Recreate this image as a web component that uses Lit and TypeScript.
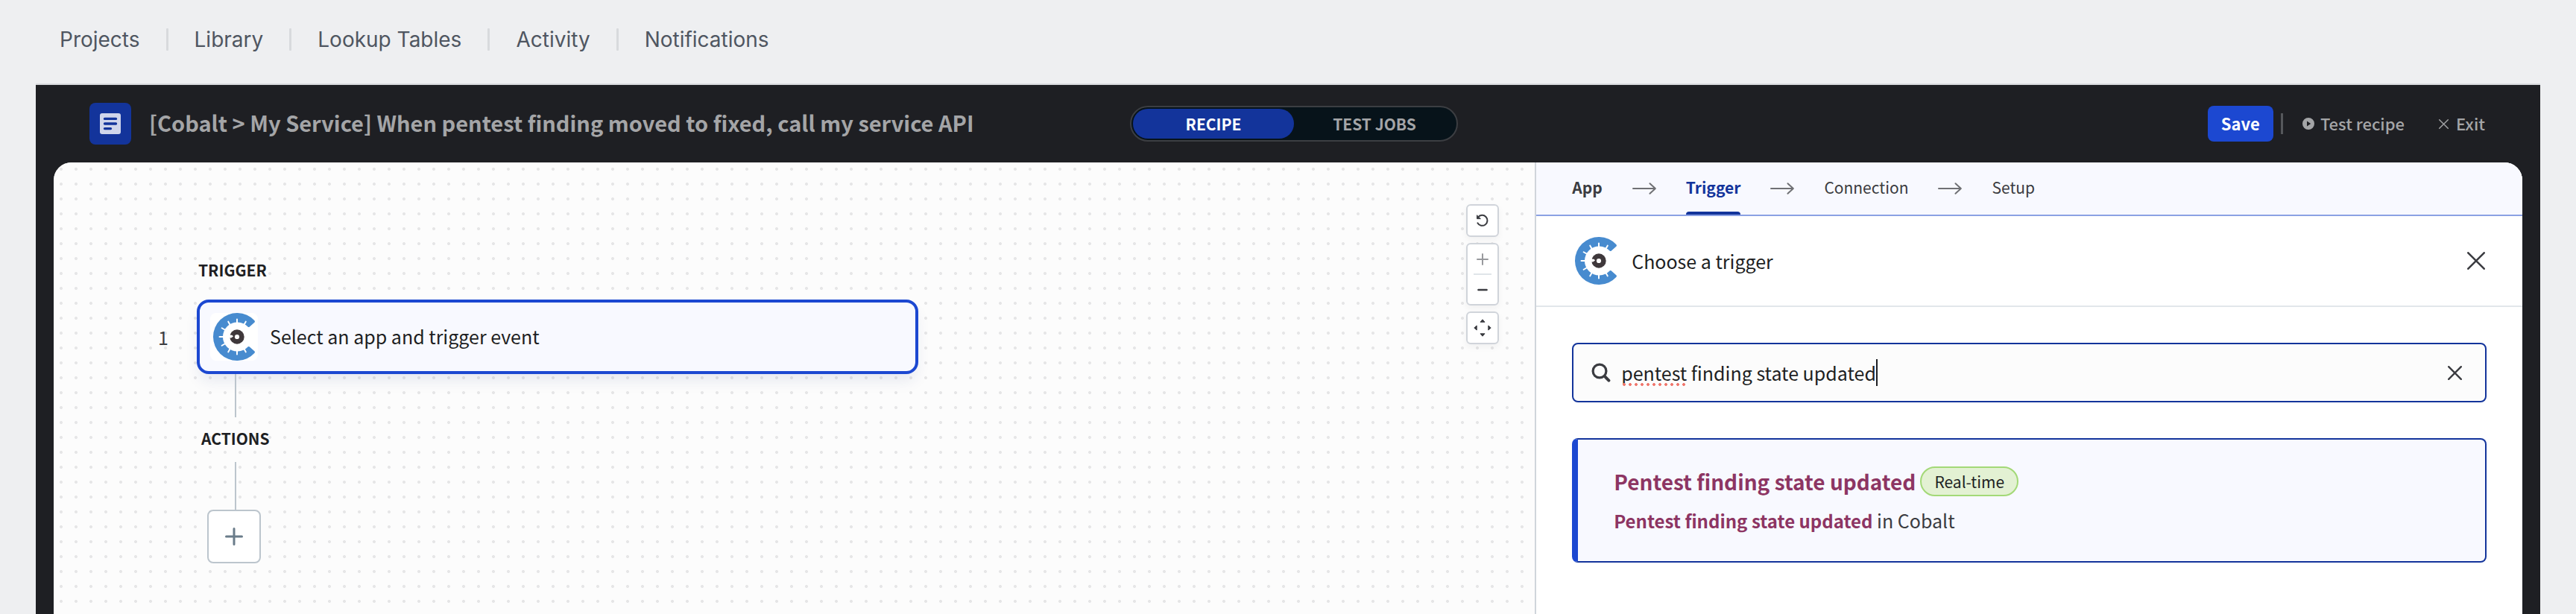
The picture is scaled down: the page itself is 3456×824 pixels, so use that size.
import { LitElement, html, css, svg } from "lit";
import { customElement, property, state } from "lit/decorators.js";
import { classMap } from "lit/directives/class-map.js";

const uiFont = css`"Noto Sans CJK SC", "Open Sans", sans-serif`;

const tickAngles = [60, 90, 120, 150, 180, 210, 240, 270, 300];

@customElement("cobalt-logo")
export class CobaltLogo extends LitElement {
  static styles = css`
    :host { display: block; flex: none; width: 64px; height: 64px; background: #fff; border-radius: 8px; overflow: hidden; }
    svg { display: block; width: 100%; height: 100%; }
  `;
  render() {
    return html`
      <svg viewBox="0 0 64 64" role="img" aria-label="Cobalt">
        <path fill="#478bcf" d="M59.5 10.3A32 32 0 1 0 59.5 53.7Q60.3 52.4 59.6 51.6L52.6 45.3Q51.6 44.6 50.8 45.2A19.5 19.5 0 1 1 50.8 18.8Q51.6 19.4 52.6 18.7L59.6 12.4Q60.3 11.6 59.5 10.3Z" />
        ${tickAngles.map((a) => {
          const r = (a * Math.PI) / 180;
          return svg`<line stroke="#fff" stroke-width="2" stroke-linecap="round"
            x1=${36 + 18 * Math.cos(r)} y1=${32 - 18 * Math.sin(r)}
            x2=${36 + 23.5 * Math.cos(r)} y2=${32 - 23.5 * Math.sin(r)} />`;
        })}
        <circle cx="36" cy="32" r="9.7" fill="#3f383b" />
        <path d="M25 29.5L29.5 29.8L31 31.4L28.2 33.5L25.5 33.2Z" fill="#fff" />
        <circle cx="36" cy="32" r="3.1" fill="#fff" />
      </svg>
    `;
  }
}

@customElement("cross-icon")
export class CrossIcon extends LitElement {
  @property({ type: Number }) size = 24;
  @property({ type: Number }) weight = 3;
  static styles = css`
    :host { display: block; }
    svg { display: block; }
  `;
  render() {
    const n = this.size;
    const p = this.weight / 2;
    return html`
      <svg width=${n} height=${n} viewBox="0 0 ${n} ${n}" aria-hidden="true" fill="none" stroke="currentColor" stroke-width=${this.weight} stroke-linecap="round">
        <path d="M${p} ${p}L${n - p} ${n - p}M${n - p} ${p}L${p} ${n - p}" />
      </svg>
    `;
  }
}

@customElement("recipe-header")
export class RecipeHeader extends LitElement {
  @state() private tab = "RECIPE";
  static styles = css`
    :host { display: grid; grid-template-columns: 1fr auto 1fr; align-items: center; height: 104px; padding: 0 56px 0 72px; color: #a4a5a7; }
    button { font: inherit; color: inherit; background: none; border: 0; padding: 0; cursor: pointer; }
    .name { display: flex; align-items: center; gap: 24px; min-width: 0; }
    .badge { display: block; flex: none; width: 56px; height: 56px; }
    h1 { margin: 0; padding-bottom: 4px; font-size: 29px; line-height: 40px; font-weight: 700; white-space: nowrap; }
    .tabs { display: flex; padding: 2px; border: 2px solid #3c3e42; border-radius: 24px; background: #07131a; }
    .tab { width: 216px; height: 40px; border-radius: 20px; font-size: 21px; line-height: 38px; font-weight: 700; }
    .tab.on { background: #13349b; color: #fff; }
    .actions { display: flex; align-items: center; justify-content: flex-end; padding-right: 18px; font-size: 22px; line-height: 32px; font-weight: 500; }
    .save { height: 48px; padding: 0 18px 2px; border-radius: 8px; background: #1c48d1; color: #fff; font-weight: 700; }
    .rule { width: 3px; height: 28px; margin: 0 26px 0 10px; background: #55575b; }
    .act { display: flex; align-items: center; gap: 8px; }
    .act + .act { margin-left: 46px; }
    .act.exit { gap: 10px; }
    .act span { padding-bottom: 2px; }
  `;
  render() {
    return html`
      <div class="name">
        <svg class="badge" viewBox="0 0 56 56" aria-hidden="true">
          <rect width="56" height="56" rx="8" fill="#13349b" />
          <rect x="14" y="14" width="28" height="28" rx="3" fill="#d0d6eb" />
          <path d="M20.5 21.4h15M20.5 28h15M20.5 34.6h8" stroke="#13349b" stroke-width="3.4" stroke-linecap="round" />
        </svg>
        <h1>[Cobalt &gt; My Service] When pentest finding moved to fixed, call my service API</h1>
      </div>
      <div class="tabs" role="tablist">
        ${["RECIPE", "TEST JOBS"].map(
          (t) => html`<button role="tab" aria-selected=${t === this.tab} class=${classMap({ tab: true, on: t === this.tab })} @click=${() => (this.tab = t)}>${t}</button>`
        )}
      </div>
      <div class="actions">
        <button class="save">Save</button>
        <span class="rule"></span>
        <button class="act">
          <svg width="16" height="16" viewBox="0 0 16 16" aria-hidden="true">
            <path fill="currentColor" fill-rule="evenodd" d="M8 0a8 8 0 1 0 0 16A8 8 0 0 0 8 0ZM6 4.6L11.2 8L6 11.4Z" />
          </svg>
          <span>Test recipe</span>
        </button>
        <button class="act exit"><cross-icon .size=${13} .weight=${1.4}></cross-icon><span>Exit</span></button>
      </div>
    `;
  }
}

@customElement("recipe-canvas")
export class RecipeCanvas extends LitElement {
  static styles = css`
    :host {
      display: flex; justify-content: space-between; align-items: flex-start; padding: 56px 48px 0 136px; color: #1e1f23;
      background: radial-gradient(circle, #e6e6e7 0 1.7px, transparent 2.3px) 0 -1px / 20px 20px #fcfcfc;
    }
    button { font: inherit; color: inherit; background: #fff; padding: 0; cursor: pointer; }
    svg { display: block; }
    .flow { display: grid; grid-template-columns: 56px 968px; padding-top: 72px; }
    h2 { grid-column: 2; margin: 0; padding-left: 2px; font-size: 21px; line-height: 32px; font-weight: 700; }
    h2.sub { padding-left: 6px; }
    .num { align-self: center; margin-top: 24px; padding-left: 4px; font-size: 25px; line-height: 36px; color: #3b3c41; }
    .step {
      display: flex; align-items: center; gap: 16px; height: 100px; margin-top: 24px; padding: 0 14px; box-sizing: border-box;
      border: 4px solid #1c48d1; border-radius: 16px; background: #f8f9ff; text-align: left;
      box-shadow: 0 12px 20px -4px rgba(30, 50, 130, 0.1); font-size: 25px;
    }
    .step span { padding-bottom: 2px; }
    .wire { grid-column: 2; width: 2px; height: 58px; margin-left: 51px; background: #bcc5cd; }
    .wire.low { height: 64px; }
    .sub { margin: 12px 0 16px; }
    .add { grid-column: 2; display: grid; place-items: center; width: 72px; height: 72px; margin-left: 14px; border: 2px solid #bcc5cd; border-radius: 8px; color: #6a7c8a; }
    .tools { display: grid; gap: 8px; color: #3b3c41; }
    .tools button, .zoom { display: grid; place-items: center; width: 44px; height: 44px; box-sizing: border-box; border: 2px solid #d0d4da; border-radius: 6px; box-shadow: 0 4px 8px rgba(30, 30, 40, 0.05); }
    .zoom { height: 84px; grid-template-rows: 1fr 2px 1fr; background: #fff; }
    .tools .zoom button { width: 36px; height: 36px; border: 0; box-shadow: none; }
    .tools .zoom .dim { color: #98999d; }
    .zoom hr { width: 24px; height: 2px; margin: 0; border: 0; background: #e0e5e9; }
  `;
  render() {
    return html`
      <section class="flow">
        <h2>TRIGGER</h2>
        <span class="num">1</span>
        <button class="step"><cobalt-logo></cobalt-logo><span>Select an app and trigger event</span></button>
        <div class="wire"></div>
        <h2 class="sub">ACTIONS</h2>
        <div class="wire low"></div>
        <button class="add" aria-label="Add step">
          <svg width="24" height="24" viewBox="0 0 24 24" fill="none" stroke="currentColor" stroke-width="3" stroke-linecap="round"><path d="M12 1.5v21M1.5 12h21" /></svg>
        </button>
      </section>
      <aside class="tools">
        <button aria-label="Undo">
          <svg width="18" height="18" viewBox="0 0 18 18" fill="none" stroke="currentColor" stroke-width="2" stroke-linecap="round">
            <path d="M3 4.5A7 7 0 1 1 2.4 12.3" /><path d="M1.5 2.2V6.6H6Z" fill="currentColor" stroke-width="1" stroke-linejoin="round" />
          </svg>
        </button>
        <div class="zoom">
          <button class="dim" aria-label="Zoom in"><svg width="16" height="16" viewBox="0 0 16 16" stroke="currentColor" stroke-width="2" stroke-linecap="round"><path d="M8 1v14M1 8h14" /></svg></button>
          <hr />
          <button aria-label="Zoom out"><svg width="16" height="16" viewBox="0 0 16 16" stroke="currentColor" stroke-width="2.4" stroke-linecap="round"><path d="M2.4 8h11.2" /></svg></button>
        </div>
        <button aria-label="Fit to screen">
          <svg width="24" height="24" viewBox="0 0 24 24" fill="currentColor" stroke="currentColor" stroke-linejoin="round"><path d="M12 .8L15 4.2H9ZM12 23.2L15 19.8H9ZM.8 12L4.2 9V15ZM23.2 12L19.8 9V15Z" /></svg>
        </button>
      </aside>
    `;
  }
}

@customElement("trigger-panel")
export class TriggerPanel extends LitElement {
  @state() private query = "pentest finding state updated";
  private steps = ["App", "Trigger", "Connection", "Setup"];
  static styles = css`
    :host { display: block; min-width: 0; border-left: 2px solid #d0d5db; background: #fff; color: #1e1f23; }
    button { font: inherit; color: inherit; background: none; border: 0; padding: 0; cursor: pointer; }
    svg { display: block; flex: none; }
    .steps { display: flex; align-items: stretch; gap: 40px; height: 70px; padding-left: 48px; border-bottom: 2px solid #8ba1e4; background: #f8f9ff; color: #3b3c41; font-size: 21px; line-height: 32px; }
    .steps svg { align-self: center; color: #6f7074; }
    .crumb { padding-bottom: 4px; }
    .done { font-weight: 700; }
    .now { font-weight: 700; color: #13349b; position: relative; }
    .now::after { content: ""; position: absolute; left: 0; right: 0; bottom: 0; height: 4px; border-radius: 4px 4px 0 0; background: #13349b; }
    .head { display: flex; align-items: center; height: 120px; padding: 0 50px 0 48px; border-bottom: 2px solid #e2e6ea; }
    h2 { flex: 1; margin: 0 0 0 16px; font-size: 25px; line-height: 40px; font-weight: 400; }
    .close { color: #3b3c41; }
    .body { display: grid; gap: 48px; padding: 48px; }
    .search { display: flex; align-items: center; height: 76px; padding: 0 31px 0 24px; border: 2px solid #13349b; border-radius: 8px; background: #fcfcfc; color: #3b3c41; }
    .field { position: relative; flex: 1; display: flex; align-items: center; margin-left: 14px; }
    input { field-sizing: content; min-width: 0; padding: 0; border: 0; outline: 0; background: none; color: #1e1f23; font: 400 25px/40px ${uiFont}; }
    .caret { width: 2px; height: 36px; background: #1e1f23; }
    .typo { position: absolute; left: 0; bottom: 2px; width: 88px; height: 4px; background: radial-gradient(circle, #f0796f 0 1.6px, transparent 2.2px) 0 0 / 8px 4px; }
    .hit { display: block; padding: 34px 48px; border: 2px solid #13349b; border-left: 8px solid #1c48d1; border-radius: 8px; background: #f8f9ff; color: #3b3c41; text-align: left; }
    .line { display: flex; align-items: center; gap: 6px; }
    .line strong { font-size: 28px; line-height: 44px; font-weight: 700; }
    .hit strong { color: #8d3563; }
    .tag { height: 36px; padding: 0 17px; border: 2px solid #a3d977; border-radius: 20px; background: #e3f1d3; color: #1e1f23; font-size: 21px; line-height: 36px; }
    .desc { display: block; margin-top: 10px; font-size: 25px; line-height: 40px; }
    .desc strong { font-size: 24px; }
  `;
  private arrow() {
    return html`<svg width="32" height="16" viewBox="0 0 32 16" fill="none" stroke="currentColor" stroke-width="2" stroke-linecap="round" stroke-linejoin="round"><path d="M1 8h29.5M23.5 1.2L30.8 8L23.5 14.8" /></svg>`;
  }
  render() {
    return html`
      <nav class="steps">
        ${this.steps.map(
          (s, i) => html`${i ? this.arrow() : ""}<button class=${classMap({ crumb: true, done: i === 0, now: i === 1 })}>${s}</button>`
        )}
      </nav>
      <header class="head">
        <cobalt-logo></cobalt-logo>
        <h2>Choose a trigger</h2>
        <button class="close" aria-label="Close"><cross-icon .size=${24} .weight=${2.6}></cross-icon></button>
      </header>
      <div class="body">
        <div class="search">
          <svg width="26" height="26" viewBox="0 0 26 26" fill="none" stroke="currentColor" stroke-width="3.2" stroke-linecap="round" aria-hidden="true"><circle cx="11" cy="11" r="8.9" /><path d="M18 18.2L23.4 23.6" stroke-width="4" /></svg>
          <div class="field">
            <input type="text" aria-label="Search triggers" spellcheck="false" .value=${this.query} @input=${(e: Event) => (this.query = (e.target as HTMLInputElement).value)} />
            <span class="caret"></span>
            ${this.query.startsWith("pentest") ? html`<span class="typo"></span>` : ""}
          </div>
          <button aria-label="Clear" @click=${() => (this.query = "")}><cross-icon .size=${19} .weight=${2.4}></cross-icon></button>
        </div>
        <button class="hit">
          <span class="line"><strong>Pentest finding state updated</strong><span class="tag">Real-time</span></span>
          <span class="desc"><strong>Pentest finding state updated</strong> in Cobalt</span>
        </button>
      </div>
    `;
  }
}

@customElement("app-root")
export class AppRoot extends LitElement {
  static styles = css`
    :host { display: flex; flex-direction: column; box-sizing: border-box; min-height: 100vh; padding: 0 48px; background: #eeeff1; font-family: ${uiFont}; }
    .nav { display: flex; align-items: center; height: 106px; padding: 0 32px 6px; font: 400 28px/32px Inter, sans-serif; }
    .nav a { color: #4f5661; text-decoration: none; }
    .nav a + a { display: flex; align-items: center; }
    .nav a + a::before { content: ""; width: 3px; height: 30px; margin: 0 35px; border-radius: 1px; background: #d8dadd; }
    .shell { flex: 1; display: flex; flex-direction: column; border-top: 2px solid #d8dadd; background: #1e1f23; }
    .work { flex: 1; display: grid; grid-template-columns: 3fr 2fr; margin: 0 24px; border-radius: 24px 24px 0 0; overflow: hidden; background: #fcfcfc; }
  `;
  render() {
    return html`
      <nav class="nav">
        ${["Projects", "Library", "Lookup Tables", "Activity", "Notifications"].map((t) => html`<a href="#">${t}</a>`)}
      </nav>
      <main class="shell">
        <recipe-header></recipe-header>
        <div class="work">
          <recipe-canvas></recipe-canvas>
          <trigger-panel></trigger-panel>
        </div>
      </main>
    `;
  }
}
